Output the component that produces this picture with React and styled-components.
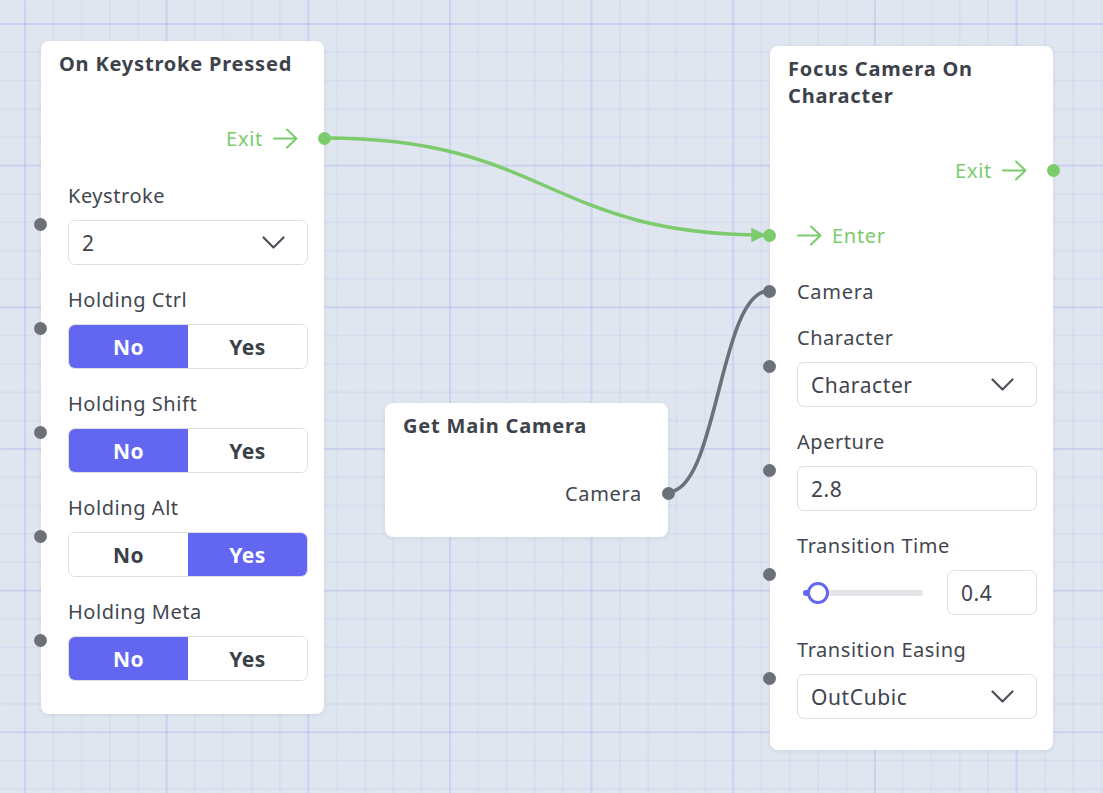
import React from "react";
import styled, { createGlobalStyle } from "styled-components";

const GlobalStyle = createGlobalStyle`
  html, body {
    margin: 0;
    padding: 0;
  }
  body {
    font-family: "Noto Sans", "Open Sans", sans-serif;
    color: #40454e;
  }
`;

const GREEN = "#7ccb6c";
const GRAY = "#6b7079";
const INDIGO = "#6366f1";
const TEXT = "#42474f";

const ArrowIcon = ({ color = GREEN }) => (
  <svg width="25" height="21" viewBox="0 0 25 21" fill="none">
    <path
      d="M1 10.5H23.5M14 1.5L23.5 10.5L14 19.5"
      stroke={color}
      strokeWidth="2"
      strokeLinecap="round"
      strokeLinejoin="round"
    />
  </svg>
);

const Chevron = () => (
  <svg width="23" height="14" viewBox="0 0 23 14" fill="none">
    <path
      d="M1.5 1.5L11.5 11.5L21.5 1.5"
      stroke="#4b5058"
      strokeWidth="2.2"
      strokeLinecap="round"
      strokeLinejoin="round"
    />
  </svg>
);

const Edges = () => (
  <EdgeLayer width="1103" height="793" viewBox="0 0 1103 793">
    <defs>
      <marker
        id="arrowhead"
        viewBox="0 0 10 10"
        refX="10"
        refY="5"
        markerWidth="4.2"
        markerHeight="4.2"
        markerUnits="strokeWidth"
        orient="auto"
      >
        <path d="M0 0L10 5L0 10Z" fill={GREEN} />
      </marker>
    </defs>
    <path
      d="M325 138 C547 138, 547 235, 766 235"
      stroke={GREEN}
      strokeWidth="3.5"
      fill="none"
      markerEnd="url(#arrowhead)"
    />
    <path
      d="M668 492 C718 492, 719 291, 769 291"
      stroke={GRAY}
      strokeWidth="3.6"
      fill="none"
    />
  </EdgeLayer>
);

// handle colour follows the port type, label colour follows the flow kind
const OutPort = ({ label, color = TEXT, dot = GREEN, arrow, mt }) => (
  <PortRow $out $mt={mt}>
    <PortLabel $color={color}>{label}</PortLabel>
    {arrow && <ArrowIcon color={color} />}
    <Handle $right $color={dot} />
  </PortRow>
);

const InPort = ({ label, color = TEXT, dot = GRAY, arrow, mt }) => (
  <PortRow $mt={mt}>
    {arrow && <ArrowIcon color={color} />}
    <PortLabel $color={color}>{label}</PortLabel>
    <Handle $color={dot} />
  </PortRow>
);

const Field = ({ label, children, mt }) => (
  <FieldBlock $mt={mt}>
    <FieldLabel>{label}</FieldLabel>
    {children}
    <Handle $color={GRAY} />
  </FieldBlock>
);

const SelectBox = ({ value }) => (
  <Control>
    <span>{value}</span>
    <Chevron />
  </Control>
);

const Toggle = ({ yes }) => (
  <ToggleGroup>
    <ToggleOption $active={!yes}>No</ToggleOption>
    <ToggleOption $active={yes}>Yes</ToggleOption>
  </ToggleGroup>
);

const App = () => {
  return (
    <>
      <GlobalStyle />
      <Canvas>
        <Edges />

        <Node $x={41} $y={41}>
          <NodeTitle>On Keystroke Pressed</NodeTitle>
          <OutPort label="Exit" color={GREEN} arrow mt={41} />
          <Field label="Keystroke" mt={25}>
            <SelectBox value="2" />
          </Field>
          <Field label="Holding Ctrl">
            <Toggle />
          </Field>
          <Field label="Holding Shift">
            <Toggle />
          </Field>
          <Field label="Holding Alt">
            <Toggle yes />
          </Field>
          <Field label="Holding Meta">
            <Toggle />
          </Field>
        </Node>

        <Node $x={385} $y={403} $pb={24}>
          <NodeTitle>Get Main Camera</NodeTitle>
          <OutPort label="Camera" dot={GRAY} mt={34} />
        </Node>

        <Node $x={770} $y={46} $pb={31}>
          <NodeTitle>Focus Camera On Character</NodeTitle>
          <OutPort label="Exit" color={GREEN} arrow mt={41} />
          <InPort label="Enter" color={GREEN} dot={GREEN} arrow mt={25} />
          <InPort label="Camera" mt={16} />
          <Field label="Character" mt={14}>
            <SelectBox value="Character" />
          </Field>
          <Field label="Aperture">
            <Control>
              <span>2.8</span>
            </Control>
          </Field>
          <Field label="Transition Time">
            <SliderRow>
              <SliderArea>
                <Track>
                  <TrackFill />
                  <Thumb />
                </Track>
              </SliderArea>
              <NumberBox>0.4</NumberBox>
            </SliderRow>
          </Field>
          <Field label="Transition Easing">
            <SelectBox value="OutCubic" />
          </Field>
        </Node>
      </Canvas>
    </>
  );
};

export default App;

const Canvas = styled.div`
  position: relative;
  width: 1103px;
  height: 793px;
  overflow: hidden;
  background-color: #e0e6ef;
  background-image: linear-gradient(
      to right,
      rgba(110, 120, 235, 0.12) 2px,
      transparent 2px
    ),
    linear-gradient(to bottom, rgba(110, 120, 235, 0.12) 2px, transparent 2px),
    linear-gradient(to right, rgba(110, 120, 235, 0.07) 1.5px, transparent 1.5px),
    linear-gradient(to bottom, rgba(110, 120, 235, 0.07) 1.5px, transparent 1.5px);
  background-size: 141.67px 141.67px, 141.67px 141.67px, 28.333px 28.333px,
    28.333px 28.333px;
  background-position: 24px 23px, 24px 23px, 24px 23px, 24px 23px;
`;

const EdgeLayer = styled.svg`
  position: absolute;
  inset: 0;
  pointer-events: none;
`;

const Node = styled.div`
  position: absolute;
  left: ${(p) => p.$x}px;
  top: ${(p) => p.$y}px;
  width: 283px;
  box-sizing: border-box;
  padding: 9px 0 ${(p) => p.$pb ?? 33}px;
  display: flex;
  flex-direction: column;
  background: #ffffff;
  border-radius: 8px;
  box-shadow: 0 1px 4px rgba(60, 70, 90, 0.1);
`;

const NodeTitle = styled.div`
  padding: 0 18px;
  font-size: 20px;
  font-weight: 700;
  line-height: 27px;
  letter-spacing: 0.8px;
  color: #3d424b;
`;

const PortRow = styled.div`
  position: relative;
  height: 40px;
  margin-top: ${(p) => p.$mt ?? 0}px;
  display: flex;
  align-items: center;
  justify-content: ${(p) => (p.$out ? "flex-end" : "flex-start")};
  gap: 10px;
  padding: ${(p) => (p.$out ? "0 26px 0 0" : "0 0 0 27px")};
`;

const PortLabel = styled.span`
  font-size: 20px;
  letter-spacing: 0.7px;
  color: ${(p) => p.$color};
`;

const Handle = styled.span`
  position: absolute;
  top: 50%;
  ${(p) => (p.$right ? "right: -7px;" : "left: -7px;")}
  width: 13px;
  height: 13px;
  margin-top: -6.5px;
  border-radius: 50%;
  background: ${(p) => p.$color};
`;

const FieldBlock = styled.div`
  position: relative;
  display: flex;
  flex-direction: column;
  gap: 11px;
  padding: 0 16px 0 27px;
  margin-top: ${(p) => p.$mt ?? 22}px;
`;

const FieldLabel = styled.div`
  font-size: 20px;
  line-height: 26px;
  letter-spacing: 0.55px;
  color: ${TEXT};
`;

const Control = styled.div`
  height: 45px;
  box-sizing: border-box;
  display: flex;
  align-items: center;
  justify-content: space-between;
  padding: 0 22px 0 13px;
  border: 1px solid #dedfe3;
  border-radius: 7px;
  font-size: 21px;
  letter-spacing: 0.6px;
  color: #3f444d;
`;

const ToggleGroup = styled.div`
  height: 45px;
  box-sizing: border-box;
  display: grid;
  grid-template-columns: 1fr 1fr;
  border: 1px solid #dedfe3;
  border-radius: 7px;
  overflow: hidden;
`;

const ToggleOption = styled.div`
  display: flex;
  align-items: center;
  justify-content: center;
  font-size: 21px;
  font-weight: 700;
  letter-spacing: 0.4px;
  background: ${(p) => (p.$active ? INDIGO : "#ffffff")};
  color: ${(p) => (p.$active ? "#ffffff" : "#3a3f48")};
`;

const SliderRow = styled.div`
  height: 45px;
  display: flex;
  align-items: center;
  gap: 12px;
`;

const SliderArea = styled.div`
  flex: 1;
  padding: 0 12px 0 6px;
`;

const Track = styled.div`
  position: relative;
  height: 6px;
  border-radius: 3px;
  background: #e4e5e9;
`;

const TrackFill = styled.div`
  width: 6px;
  height: 100%;
  border-radius: 3px 0 0 3px;
  background: ${INDIGO};
`;

const Thumb = styled.div`
  position: absolute;
  left: 4px;
  top: 50%;
  width: 22px;
  height: 22px;
  margin-top: -11px;
  box-sizing: border-box;
  border: 3px solid ${INDIGO};
  border-radius: 50%;
  background: #ffffff;
`;

const NumberBox = styled(Control)`
  width: 90px;
  justify-content: flex-start;
`;
